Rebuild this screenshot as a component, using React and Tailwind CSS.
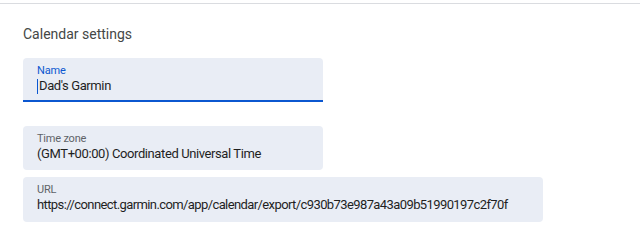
export default function App() {
  return (
    <div className="h-[249px] w-[640px] bg-white pt-[3px] font-['Roboto','Liberation_Sans',sans-serif]">
      <div className="border-t border-[#dadce0] pl-[23px] pt-[20px]">
        <h2 className="text-[14px] leading-[20px] text-[#444746]">Calendar settings</h2>

        <div className="mt-[14px] h-[44px] w-[300px] rounded-t-[4px] border-b-2 border-[#0b57d0] bg-[#e9edf5] pl-[14px] pt-[7px]">
          <div className="text-[11px] leading-[12px] tracking-[-0.2px] text-[#0b57d0]">Name</div>
          <div className="flex items-center text-[13px] leading-[18px] tracking-[-0.4px] text-[#1f1f1f]">
            <span className="mr-px inline-block h-[15px] w-px bg-[#0b57d0]" />
            <span>Dad's Garmin</span>
          </div>
        </div>

        <div className="mt-[24px] h-[44px] w-[300px] rounded-[4px] bg-[#e9edf5] pl-[14px] pt-[7px]">
          <div className="text-[11px] leading-[12px] tracking-[-0.2px] text-[#5f6368]">Time zone</div>
          <div className="text-[13px] leading-[18px] tracking-[-0.4px] text-[#1f1f1f]">
            (GMT+00:00) Coordinated Universal Time
          </div>
        </div>

        <div className="mt-[7px] h-[45px] w-[520px] rounded-[4px] bg-[#e9edf5] pl-[14px] pt-[7px]">
          <div className="text-[11px] leading-[12px] tracking-[-0.2px] text-[#5f6368]">URL</div>
          <div className="text-[13px] leading-[18px] tracking-[-0.6px] text-[#1f1f1f]">
            https://connect.garmin.com/app/calendar/export/c930b73e987a43a09b51990197c2f70f
          </div>
        </div>
      </div>
    </div>
  );
}
